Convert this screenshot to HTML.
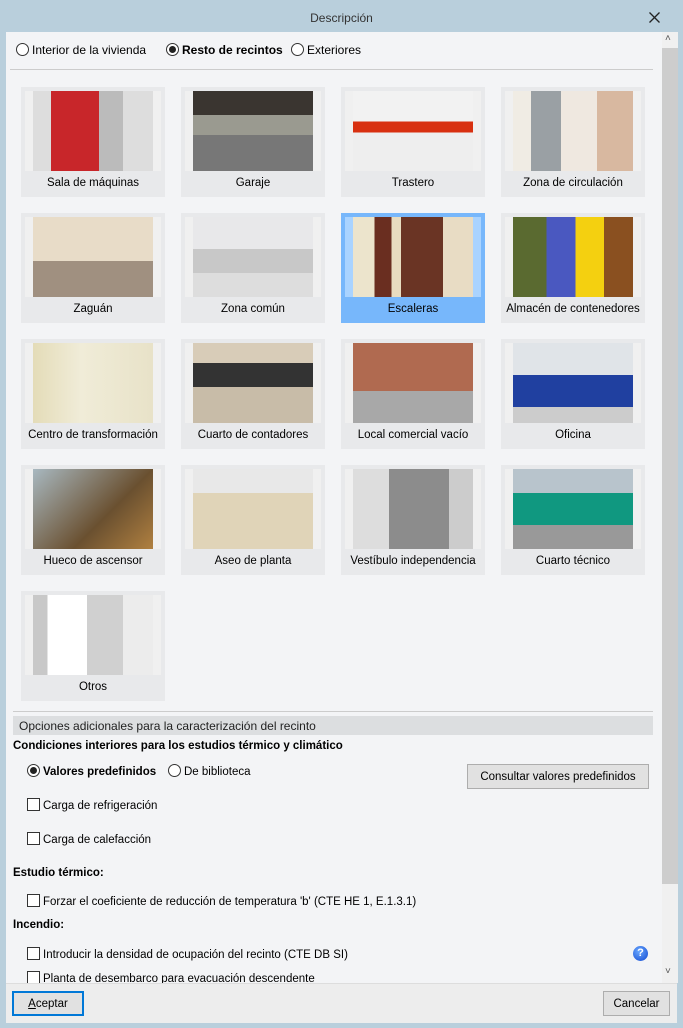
<!DOCTYPE html>
<html><head><meta charset="utf-8"><style>
*{box-sizing:border-box;margin:0;padding:0}
body{width:683px;height:1028px;overflow:hidden;background:#b9cfdc;font-family:"Liberation Sans",sans-serif;font-size:11.5px;color:#000;position:relative}
.abs{position:absolute}
#content{left:6px;top:32px;width:671px;height:951px;background:#f3f4f6}
.title{left:0;top:11px;width:683px;text-align:center;font-size:12px;color:#333}
.tile{position:absolute;width:144px;height:110px;background:#e8e9eb}
.tile .fr{position:absolute;left:4px;top:4px;width:136px;height:80px;background:#f0f0f0}
.tile .im{position:absolute;left:12px;top:4px;width:120px;height:80px}
.tile .lb{position:absolute;left:0;top:90px;width:144px;text-align:center;white-space:nowrap;font-size:11.5px}
.sel{background:#77b7fb}.sel .fr{background:#a9d3ff}
.radio{display:inline-block;width:13px;height:13px;border:1px solid #333;border-radius:50%;vertical-align:-2px;margin-right:3px;position:relative;background:#fff}
.radio.on::after{content:"";position:absolute;left:2px;top:2px;width:7px;height:7px;border-radius:50%;background:#222}
.cb{display:inline-block;width:13px;height:13px;border:1px solid #333;vertical-align:-2px;margin-right:3px;background:#fff}
.btn{position:absolute;background:#e1e1e1;border:1px solid #adadad;text-align:center}
b{font-weight:bold}
</style></head><body>
<div class="abs title">Descripción</div>
<svg class="abs" style="left:649px;top:12px" width="11" height="11"><path d="M0.5 0.5L10.5 10.5M10.5 0.5L0.5 10.5" stroke="#222" stroke-width="1.3"/></svg>
<div id="content" class="abs"></div>
<div class="abs" style="left:662px;top:32px;width:16px;height:951px;background:#f0f0f0"></div>
<div class="abs" style="left:662px;top:48px;width:16px;height:836px;background:#cdcdcd"></div>
<div class="abs" style="left:665px;top:33px;font-size:10px;color:#555">˄</div>
<div class="abs" style="left:665px;top:966px;font-size:10px;color:#555">˅</div>

<div class="abs" style="left:16px;top:43px;font-size:12px"><span class="radio"></span>Interior de la vivienda</div>
<div class="abs" style="left:166px;top:43px;font-size:12px"><span class="radio on"></span><b>Resto de recintos</b></div>
<div class="abs" style="left:291px;top:43px;font-size:12px"><span class="radio"></span>Exteriores</div>
<div class="abs" style="left:10px;top:69px;width:643px;height:1px;background:#ccc"></div>

<div class="tile" style="left:21px;top:87px"><div class="fr"></div><div class="im" style="background:linear-gradient(90deg,#ddd 0 15%,#c8262a 15% 55%,#bbb 55% 75%,#ddd 75%)"></div><div class="lb">Sala de máquinas</div></div>
<div class="tile" style="left:181px;top:87px"><div class="fr"></div><div class="im" style="background:linear-gradient(180deg,#3a3530 0 30%,#9a9a90 30% 55%,#777 55%)"></div><div class="lb">Garaje</div></div>
<div class="tile" style="left:341px;top:87px"><div class="fr"></div><div class="im" style="background:linear-gradient(180deg,#f2f2f2 0 38%,#d83010 38% 52%,#eee 52%)"></div><div class="lb">Trastero</div></div>
<div class="tile" style="left:501px;top:87px"><div class="fr"></div><div class="im" style="background:linear-gradient(90deg,#f0ece4 0 15%,#9aa0a4 15% 40%,#efe8e0 40% 70%,#d8b8a0 70%)"></div><div class="lb">Zona de circulación</div></div>

<div class="tile" style="left:21px;top:213px"><div class="fr"></div><div class="im" style="background:linear-gradient(180deg,#e8dcc8 0 55%,#a09080 55%)"></div><div class="lb">Zaguán</div></div>
<div class="tile" style="left:181px;top:213px"><div class="fr"></div><div class="im" style="background:linear-gradient(180deg,#e8e8ea 0 40%,#c8c8c8 40% 70%,#ddd 70%)"></div><div class="lb">Zona común</div></div>
<div class="tile sel" style="left:341px;top:213px"><div class="fr"></div><div class="im" style="background:linear-gradient(90deg,#ece4cc 0 18%,#6a2e20 18% 32%,#e8dcc0 32% 40%,#6a3424 40% 75%,#e8dcc4 75%)"></div><div class="lb">Escaleras</div></div>
<div class="tile" style="left:501px;top:213px"><div class="fr"></div><div class="im" style="background:linear-gradient(90deg,#5a6a30 0 28%,#4a58c0 28% 52%,#f4d010 52% 76%,#8a5020 76%)"></div><div class="lb">Almacén de contenedores</div></div>

<div class="tile" style="left:21px;top:339px"><div class="fr"></div><div class="im" style="background:linear-gradient(90deg,#e4dcb8,#f0ecd8 40%,#e8e2c8)"></div><div class="lb">Centro de transformación</div></div>
<div class="tile" style="left:181px;top:339px"><div class="fr"></div><div class="im" style="background:linear-gradient(180deg,#d8ccb8 0 25%,#333 25% 55%,#c8bca8 55%)"></div><div class="lb">Cuarto de contadores</div></div>
<div class="tile" style="left:341px;top:339px"><div class="fr"></div><div class="im" style="background:linear-gradient(180deg,#b06a50 0 60%,#a8a8a8 60%)"></div><div class="lb">Local comercial vacío</div></div>
<div class="tile" style="left:501px;top:339px"><div class="fr"></div><div class="im" style="background:linear-gradient(180deg,#e0e4e8 0 40%,#2040a0 40% 80%,#ccc 80%)"></div><div class="lb">Oficina</div></div>

<div class="tile" style="left:21px;top:465px"><div class="fr"></div><div class="im" style="background:linear-gradient(135deg,#a8b8c0,#6a5030 60%,#b08040)"></div><div class="lb">Hueco de ascensor</div></div>
<div class="tile" style="left:181px;top:465px"><div class="fr"></div><div class="im" style="background:linear-gradient(180deg,#e8e8e8 0 30%,#e0d4b8 30%)"></div><div class="lb">Aseo de planta</div></div>
<div class="tile" style="left:341px;top:465px"><div class="fr"></div><div class="im" style="background:linear-gradient(90deg,#ddd 0 30%,#8c8c8c 30% 80%,#ccc 80%)"></div><div class="lb">Vestíbulo independencia</div></div>
<div class="tile" style="left:501px;top:465px"><div class="fr"></div><div class="im" style="background:linear-gradient(180deg,#b8c4cc 0 30%,#109880 30% 70%,#999 70%)"></div><div class="lb">Cuarto técnico</div></div>

<div class="tile" style="left:21px;top:591px"><div class="fr"></div><div class="im" style="background:linear-gradient(90deg,#c8c8c8 0 12%,#fff 12% 45%,#d0d0d0 45% 75%,#ececec 75%)"></div><div class="lb">Otros</div></div>

<div class="abs" style="left:13px;top:711px;width:640px;height:1px;background:#ccc"></div>
<div class="abs" style="left:13px;top:716px;width:640px;height:19px;background:#dcdee0;padding:3px 0 0 6px;font-size:12px;color:#222">Opciones adicionales para la caracterización del recinto</div>
<div class="abs" style="left:13px;top:740px"><b>Condiciones interiores para los estudios térmico y climático</b></div>
<div class="abs" style="left:27px;top:764px"><span class="radio on"></span><b>Valores predefinidos</b></div>
<div class="abs" style="left:168px;top:764px"><span class="radio"></span>De biblioteca</div>
<div class="btn" style="left:467px;top:764px;width:182px;height:25px;padding-top:6px">Consultar valores predefinidos</div>
<div class="abs" style="left:27px;top:798px"><span class="cb"></span>Carga de refrigeración</div>
<div class="abs" style="left:27px;top:832px"><span class="cb"></span>Carga de calefacción</div>
<div class="abs" style="left:13px;top:867px"><b>Estudio térmico:</b></div>
<div class="abs" style="left:27px;top:894px"><span class="cb"></span>Forzar el coeficiente de reducción de temperatura 'b' (CTE HE 1, E.1.3.1)</div>
<div class="abs" style="left:13px;top:919px"><b>Incendio:</b></div>
<div class="abs" style="left:27px;top:947px"><span class="cb"></span>Introducir la densidad de ocupación del recinto (CTE DB SI)</div>
<div class="abs" style="left:633px;top:946px;width:15px;height:15px;border-radius:50%;background:radial-gradient(circle at 40% 35%,#6aa8ff,#1048d0);color:#fff;font-weight:bold;font-size:11px;text-align:center;line-height:15px">?</div>
<div class="abs" style="left:27px;top:971px;height:12px;overflow:hidden"><span class="cb"></span>Planta de desembarco para evacuación descendente</div>

<div class="abs" style="left:6px;top:983px;width:671px;height:40px;background:#ededed;border-top:1px solid #ddd"></div>
<div class="btn" style="left:12px;top:991px;width:72px;height:25px;border:2px solid #0078d7;padding-top:5px"><u>A</u>ceptar</div>
<div class="btn" style="left:603px;top:991px;width:67px;height:25px;padding-top:6px">Cancelar</div>
</body></html>
